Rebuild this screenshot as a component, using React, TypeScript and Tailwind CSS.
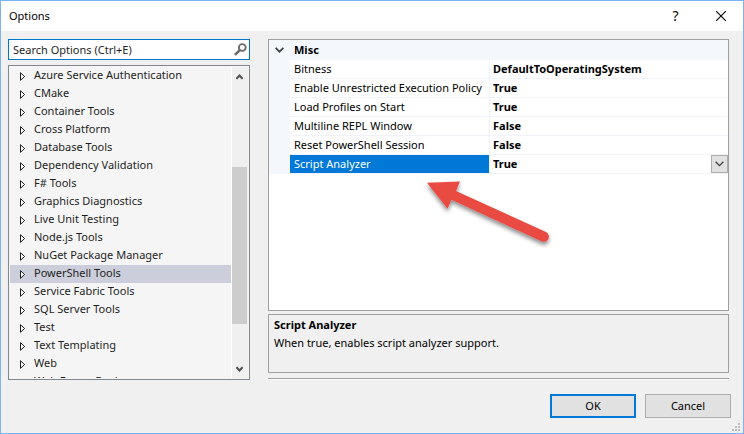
import { useState } from 'react';

const categories = [
  'Azure Service Authentication',
  'CMake',
  'Container Tools',
  'Cross Platform',
  'Database Tools',
  'Dependency Validation',
  'F# Tools',
  'Graphics Diagnostics',
  'Live Unit Testing',
  'Node.js Tools',
  'NuGet Package Manager',
  'PowerShell Tools',
  'Service Fabric Tools',
  'SQL Server Tools',
  'Test',
  'Text Templating',
  'Web',
  'Web Forms Designer',
];

const properties = [
  { name: 'Bitness', value: 'DefaultToOperatingSystem' },
  { name: 'Enable Unrestricted Execution Policy', value: 'True' },
  { name: 'Load Profiles on Start', value: 'True' },
  { name: 'Multiline REPL Window', value: 'False' },
  { name: 'Reset PowerShell Session', value: 'False' },
];

function TitleBar() {
  return (
    <header className="flex h-[30px] shrink-0 items-center bg-white pl-2">
      <h1 className="flex-1">Options</h1>
      <button type="button" aria-label="Help" className="flex w-[45px] justify-center text-sm leading-4">
        ?
      </button>
      <button type="button" aria-label="Close" className="flex w-[45px] justify-center">
        <svg width="10" height="10" viewBox="0 0 10 10" fill="none" stroke="#000" strokeWidth="1.1">
          <path d="M0 0L10 10M10 0L0 10" />
        </svg>
      </button>
    </header>
  );
}

function SearchBox() {
  return (
    <div className="flex h-[21px] shrink-0 items-center border border-[#0078c8] bg-white pl-1 pr-0.5">
      <input
        type="text"
        aria-label="Search Options"
        placeholder="Search Options (Ctrl+E)"
        className="min-w-0 flex-1 bg-transparent placeholder:text-[#1e1e1e] focus:outline-none"
      />
      <svg width="13" height="13" viewBox="0 0 13 13" fill="none" stroke="#6d6d6d">
        <circle cx="8.3" cy="4.5" r="3.4" strokeWidth="1.9" />
        <path d="M5.9 7L1 11.9" strokeWidth="2.6" />
      </svg>
    </div>
  );
}

function ScrollBar() {
  return (
    <div className="flex w-[17px] shrink-0 flex-col border-l border-white bg-[#f0f0f0] pr-px">
      <button type="button" aria-label="Scroll up" className="flex h-[19px] items-center justify-center">
        <svg width="7" height="6" viewBox="0 0 7 6" fill="none" stroke="#505050" strokeWidth="2">
          <path d="M0.4 4.8L3.5 1.5L6.6 4.8" />
        </svg>
      </button>
      <div className="flex flex-1 flex-col">
        <div className="flex-[81]" />
        <div className="flex-[157] bg-[#cdcdcd]" />
        <div className="flex-[35]" />
      </div>
      <button type="button" aria-label="Scroll down" className="flex h-[19px] items-center justify-center">
        <svg width="7" height="6" viewBox="0 0 7 6" fill="none" stroke="#505050" strokeWidth="2">
          <path d="M0.4 1.2L3.5 4.5L6.6 1.2" />
        </svg>
      </button>
    </div>
  );
}

function CategoryTree() {
  return (
    <div className="flex h-[315px] border border-[#828790] bg-[#f5f5f5] p-px">
      <ul role="tree" aria-label="Categories" className="min-w-0 flex-1 overflow-hidden">
        {categories.map((name) => (
          <li
            key={name}
            role="treeitem"
            aria-selected={name === 'PowerShell Tools'}
            className={
              name === 'PowerShell Tools'
                ? 'flex h-[18px] items-center gap-[7px] bg-[#cccedb] pl-2.5'
                : 'flex h-[18px] items-center gap-[7px] pl-2.5'
            }
          >
            <svg width="7" height="9" viewBox="0 0 7 9" fill="#fff" stroke="#1e1e1e">
              <path d="M0.5 0.7V8.3L4.6 4.5Z" />
            </svg>
            <span className="whitespace-nowrap pb-0.5 text-[#1e1e1e]">{name}</span>
          </li>
        ))}
      </ul>
      <ScrollBar />
    </div>
  );
}

function PropertyGrid() {
  const [analyzer, setAnalyzer] = useState('True');
  return (
    <div className="h-[272px] border border-[#a0a0a0] bg-white">
      <table className="w-full table-fixed border-separate border-spacing-0 text-left">
        <colgroup>
          <col className="w-[21px]" />
          <col className="w-[200px]" />
          <col />
        </colgroup>
        <thead>
          <tr className="h-5 bg-[#f4f7fc]">
            <th className="p-0">
              <button type="button" aria-label="Collapse Misc" className="flex h-5 w-full items-center justify-center">
                <svg width="9" height="6" viewBox="0 0 9 6" fill="none" stroke="#404040" strokeWidth="1.7">
                  <path d="M0.6 0.8L4.5 4.7L8.4 0.8" />
                </svg>
              </button>
            </th>
            <th colSpan={2} className="p-0 pl-1 font-bold">
              Misc
            </th>
          </tr>
        </thead>
        <tbody>
          {properties.map((p) => (
            <tr key={p.name} className="h-[19px]">
              <td className="bg-[#f4f7fc] p-0" />
              <th className="whitespace-nowrap border-b border-r border-[#f0f4fa] p-0 pl-1 font-normal">{p.name}</th>
              <td className="border-b border-[#f0f4fa] p-0 pl-[3px] font-bold">{p.value}</td>
            </tr>
          ))}
          <tr className="h-[19px]">
            <td className="bg-[#f4f7fc] p-0" />
            <th className="border-b border-r border-[#f0f4fa] bg-[#0078d7] bg-clip-padding p-0 pl-1 font-normal text-white">
              <label htmlFor="script-analyzer">Script Analyzer</label>
            </th>
            <td className="border-b border-[#f0f4fa] p-0">
              <div className="grid h-[18px]">
                <select
                  id="script-analyzer"
                  value={analyzer}
                  onChange={(e) => setAnalyzer(e.target.value)}
                  className="col-start-1 row-start-1 w-full appearance-none bg-transparent pl-[3px] font-bold focus:outline-none"
                >
                  <option>True</option>
                  <option>False</option>
                </select>
                <span className="pointer-events-none col-start-1 row-start-1 flex w-[17px] items-center justify-center justify-self-end border border-[#adadad] bg-[#e1e1e1]">
                  <svg width="9" height="6" viewBox="0 0 9 6" fill="none" stroke="#404040" strokeWidth="1.3">
                    <path d="M0.6 0.8L4.5 4.7L8.4 0.8" />
                  </svg>
                </span>
              </div>
            </td>
          </tr>
        </tbody>
      </table>
    </div>
  );
}

function Arrow() {
  return (
    <svg
      className="pointer-events-none absolute left-[419px] top-[174px]"
      width="140"
      height="80"
      viewBox="420 175 140 80"
      aria-hidden="true"
    >
      <defs>
        <filter id="arrow-shadow" x="-20%" y="-20%" width="140%" height="150%">
          <feDropShadow dx="0" dy="3" stdDeviation="2" floodColor="#000" floodOpacity="0.45" />
        </filter>
      </defs>
      <path
        d="M427 182.8L460 181.5L456 191L546 232A5 5 0 0 1 541.5 241.3L451.5 199.8L447.5 208.8Z"
        fill="#e94b43"
        filter="url(#arrow-shadow)"
      />
    </svg>
  );
}

function ResizeGrip() {
  return (
    <svg width="8" height="8" viewBox="0 0 8 8" fill="#bfbfbf" className="ml-px self-end" aria-hidden="true">
      <path d="M6 0h2v2h-2zM3 3h2v2h-2zM6 3h2v2h-2zM0 6h2v2h-2zM3 6h2v2h-2zM6 6h2v2h-2z" />
    </svg>
  );
}

export default function App() {
  return (
    <div className="relative flex min-h-screen flex-col border border-[#7ab4f5] bg-[#f0f0f0] font-['Noto_Sans','Open_Sans',sans-serif] text-[11px] leading-4 text-black">
      <TitleBar />
      <main className="flex gap-[18px] pl-[7px] pr-[14px] pt-2">
        <div className="flex w-[242px] shrink-0 flex-col gap-[5px]">
          <SearchBox />
          <CategoryTree />
        </div>
        <div className="min-w-0 flex-1">
          <PropertyGrid />
          <section className="mt-[3px] h-[59px] border border-[#a0a0a0] px-[5px] pt-0.5">
            <h2 className="font-bold">Script Analyzer</h2>
            <p className="mt-0.5">When true, enables script analyzer support.</p>
          </section>
          <div className="mt-[5px] h-0.5 border-b border-t border-b-white border-t-[#a0a0a0]" />
        </div>
      </main>
      <footer className="flex flex-1 justify-end pb-0.5 pr-[3px]">
        <div className="flex gap-[9px] pt-[14px]">
          <button type="button" className="h-6 w-[86px] border-2 border-[#0078d7] bg-[#e1e1e1]">
            OK
          </button>
          <button type="button" className="h-6 w-[86px] border border-[#adadad] bg-[#e1e1e1]">
            Cancel
          </button>
        </div>
        <ResizeGrip />
      </footer>
      <Arrow />
    </div>
  );
}
